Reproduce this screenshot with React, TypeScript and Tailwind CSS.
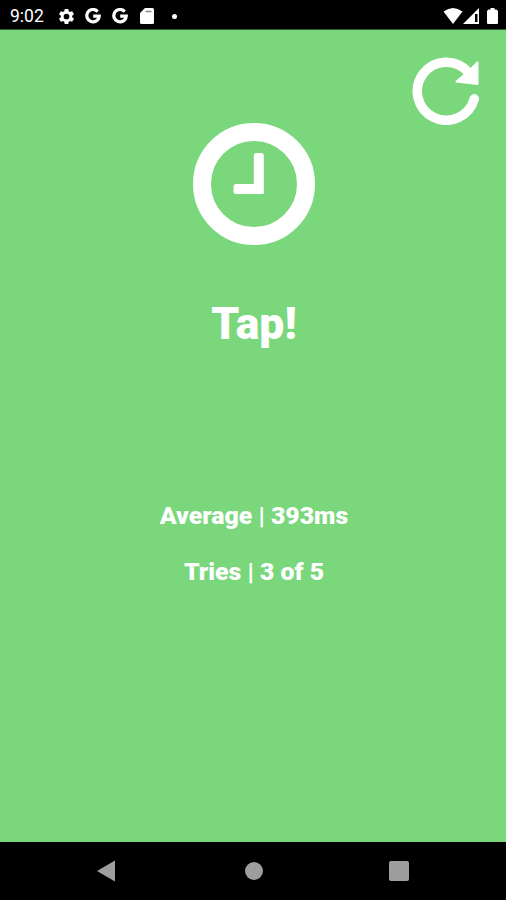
import { useState } from "react";

const MAX_TRIES = 5;

function GoogleIcon() {
  return (
    <svg viewBox="0 0 16 16" className="h-4 w-4" aria-hidden>
      <path d="M12.7 3.6 A6.2 6.2 0 1 0 14.2 8.1 H8.2" fill="none" stroke="#fff" strokeWidth="3.2" />
    </svg>
  );
}

function StatusBar() {
  return (
    <header className="flex h-[29px] shrink-0 items-center justify-between bg-black pt-[3px] pr-2 pl-2.5 text-white">
      <div className="flex items-center">
        <span className="w-[46.5px] pt-px text-[17.5px] leading-none">9:02</span>
        <svg viewBox="0 0 24 24" className="mr-[9px] h-[19px] w-[19px]" fill="#fff" aria-hidden>
          <path d="M19.14 12.94c.04-.3.06-.61.06-.94 0-.32-.02-.64-.07-.94l2.03-1.58c.18-.14.23-.41.12-.61l-1.92-3.32c-.12-.22-.37-.29-.59-.22l-2.39.96c-.5-.38-1.03-.7-1.62-.94l-.36-2.54c-.04-.24-.24-.41-.48-.41h-3.84c-.24 0-.43.17-.47.41l-.36 2.54c-.59.24-1.13.57-1.62.94l-2.39-.96c-.22-.08-.47 0-.59.22L2.74 8.87c-.12.21-.08.47.12.61l2.03 1.58c-.05.3-.09.63-.09.94s.02.64.07.94l-2.03 1.58c-.18.14-.23.41-.12.61l1.92 3.32c.12.22.37.29.59.22l2.39-.96c.5.38 1.03.7 1.62.94l.36 2.54c.05.24.24.41.48.41h3.84c.24 0 .44-.17.47-.41l.36-2.54c.59-.24 1.13-.56 1.62-.94l2.39.96c.22.08.47 0 .59-.22l1.92-3.32c.12-.22.07-.47-.12-.61l-2.01-1.58zM12 15.6a3.6 3.6 0 1 1 0-7.2 3.6 3.6 0 0 1 0 7.2z" />
        </svg>
        <GoogleIcon />
        <span className="w-[11.5px]" />
        <GoogleIcon />
        <svg viewBox="0 0 14 16" className="ml-3 h-4 w-3.5" aria-hidden>
          <path d="M5 0h7.5Q14 0 14 1.500V14.500Q14 16 12.500 16h-11Q0 16 0 14.500V5z" fill="#fff" />
          <path d="M5.500 3.500h6" stroke="#888" strokeWidth="1.500" />
        </svg>
        <span className="ml-[18px] h-[5px] w-[5px] rounded-full bg-white" />
      </div>
      <div className="flex items-center">
        <svg viewBox="0 0 20 16" className="h-4 w-5" fill="#fff" aria-hidden>
          <path d="M0.500 3.500Q10-3.500 19.500 3.500L10 16z" />
        </svg>
        <svg viewBox="0 0 16 16" className="h-4 w-4" aria-hidden>
          <path d="M16 0V16H0z" fill="#fff" />
          <path d="M12 6h2.500v8h-2.500z" fill="#000" />
        </svg>
        <svg viewBox="0 0 11 16" className="ml-2 h-4 w-[11px]" fill="#fff" aria-hidden>
          <path d="M3.500 0h4v1.500H9.500L11 3V15Q11 16 10 16H1Q0 16 0 15V3L1.500 1.500h2z" />
        </svg>
      </div>
    </header>
  );
}

function ClockIcon() {
  return (
    <svg viewBox="0 0 122 122" className="h-[122px] w-[122px]" fill="none" stroke="#fff" aria-hidden>
      <circle cx="61" cy="61" r="52" strokeWidth="18" />
      <path
        d="M63.300 30h5q2.500 0 2.500 2.500V71H43q-2.500 0-2.500-2.500v-5q0-2.500 2.500-2.500h17.800V32.500q0-2.500 2.500-2.500z"
        fill="#fff"
        stroke="none"
      />
    </svg>
  );
}

function RestartIcon() {
  return (
    <svg viewBox="0 0 68 68" className="h-[68px] w-[68px]" aria-hidden>
      <path
        d="M62.300 41.800A29 29 0 1 1 56 15"
        fill="none"
        stroke="#fff"
        strokeWidth="9.500"
        strokeLinecap="round"
      />
      <path d="M65.500 5.500V27L44.500 24.500L57 14z" fill="#fff" stroke="#fff" strokeWidth="2" strokeLinejoin="round" />
    </svg>
  );
}

function NavBar() {
  return (
    <nav className="flex h-[58px] shrink-0 items-center justify-between bg-black pr-[97px] pl-24 text-[#9e9e9e]">
      <svg viewBox="0 0 20 22" className="h-[22px] w-5" fill="currentColor" aria-hidden>
        <path d="M1 11L19 0.500V21.500z" />
      </svg>
      <span className="ml-0.5 h-[18px] w-[18px] rounded-full bg-current" />
      <span className="h-5 w-5 rounded-[2px] bg-current" />
    </nav>
  );
}

export default function App() {
  const [tries, setTries] = useState(3);

  return (
    <div className="flex h-[900px] w-[506px] flex-col overflow-hidden bg-black font-['Roboto',sans-serif]">
      <StatusBar />
      <main
        className="flex flex-1 flex-col items-center border-t border-[#315a31] bg-[#7ad77c] pl-0.5 font-black text-white select-none"
        onClick={() => setTries((t) => Math.min(t + 1, MAX_TRIES))}
      >
        <button
          type="button"
          aria-label="Restart"
          className="mt-[27px] mr-[26px] self-end"
          onClick={(e) => {
            e.stopPropagation();
            setTries(0);
          }}
        >
          <RestartIcon />
        </button>
        <div className="-mt-0.5">
          <ClockIcon />
        </div>
        <h1 className="mt-[52px] text-[44.5px] leading-[54px]">Tap!</h1>
        <p className="mt-[149px] text-[24.8px] leading-8">Average | 393ms</p>
        <p className="mt-6 text-[24.8px] leading-8">
          Tries | {tries} of {MAX_TRIES}
        </p>
      </main>
      <NavBar />
    </div>
  );
}
